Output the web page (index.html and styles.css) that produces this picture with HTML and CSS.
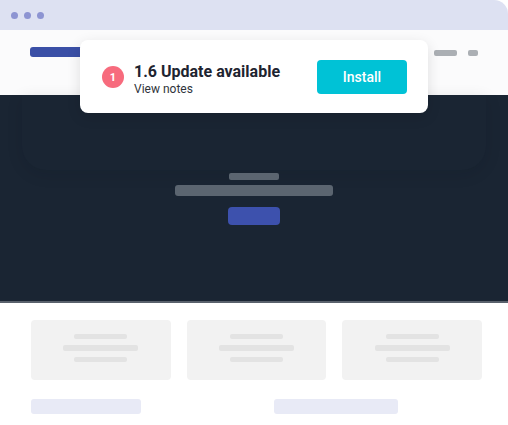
FILE: index.html
```html
<!DOCTYPE html>
<html>
<head>
<meta charset="utf-8">
<link rel="stylesheet" href="styles.css">
</head>
<body>
<div class="window">
  <div class="titlebar">
    <span class="dot"></span><span class="dot"></span><span class="dot"></span>
  </div>
  <div class="header">
    <div class="logo"></div>
    <div class="nav">
      <span class="nav-a"></span><span class="nav-b"></span>
    </div>
  </div>
  <div class="hero">
    <div class="glow"></div>
    <div class="hero-inner">
      <span class="h-line1"></span>
      <span class="h-line2"></span>
      <span class="h-btn"></span>
    </div>
  </div>
  <div class="content">
    <div class="cards">
      <div class="card"><span class="l1"></span><span class="l2"></span><span class="l3"></span></div>
      <div class="card"><span class="l1"></span><span class="l2"></span><span class="l3"></span></div>
      <div class="card"><span class="l1"></span><span class="l2"></span><span class="l3"></span></div>
    </div>
    <div class="footer-bars">
      <span class="fb1"></span>
      <span class="fb2"></span>
    </div>
  </div>

  <div class="toast">
    <div class="badge">1</div>
    <div class="toast-text">
      <div class="toast-title">1.6 Update available</div>
      <div class="toast-sub">View notes</div>
    </div>
    <button class="install">Install</button>
  </div>
</div>
</body>
</html>
```

FILE: styles.css
```css
* { box-sizing: border-box; }
html, body { margin: 0; padding: 0; background: #ffffff; }
body { font-family: Roboto, "Noto Sans", sans-serif; }

.window {
  position: relative;
  width: 508px;
  height: 425px;
  overflow: hidden;
  border-top-right-radius: 14px;
  background: #ffffff;
}

.titlebar {
  height: 30px;
  background: #dde1f2;
  display: flex;
  align-items: center;
  gap: 6px;
  padding-left: 11px;
  padding-top: 1px;
}
.dot {
  width: 7px; height: 7px; border-radius: 50%;
  background: #8d94d2;
}

.header {
  height: 65px;
  background: #fbfbfc;
  display: flex;
  align-items: flex-start;
  justify-content: space-between;
  padding: 17px 30px 0 30px;
}
.logo {
  width: 72px; height: 10px; border-radius: 3px;
  background: #3a4fa6;
}
.nav { display: flex; gap: 11px; padding-top: 3px; }
.nav-a { width: 23px; height: 6px; border-radius: 2px; background: #abafb4; display: block; }
.nav-b { width: 10px; height: 6px; border-radius: 2px; background: #abafb4; display: block; }

.hero {
  position: relative;
  height: 208px;
  background: #1a2533;
  border-bottom: 2px solid #59616c;
  display: flex;
  justify-content: center;
}
.glow {
  position: absolute;
  left: 22px; right: 22px; top: 0; height: 75px;
  border-radius: 0 0 24px 24px;
  background: #1a2533;
  box-shadow: 0 4px 16px rgba(10, 16, 24, 0.12);
}
.hero-inner {
  position: relative;
  display: flex;
  flex-direction: column;
  align-items: center;
  padding-top: 78px;
}
.hero-inner span { display: block; }
.h-line1 { width: 50px; height: 7px; border-radius: 2px; background: #5b6570; }
.h-line2 { width: 158px; height: 11px; border-radius: 3px; background: #5b6570; margin-top: 5px; }
.h-btn { width: 52px; height: 18px; border-radius: 4px; background: #3d51ad; margin-top: 11px; }

.content { padding: 17px 26px 0 31px; }
.cards { display: flex; gap: 16px; }
.card {
  width: 140px; height: 60px;
  background: #f2f2f2;
  border-radius: 4px;
  display: flex;
  flex-direction: column;
  align-items: center;
  padding-top: 14px;
  gap: 6px;
}
.card span { display: block; background: #e3e3e3; border-radius: 2px; }
.card .l1 { width: 53px; height: 5px; }
.card .l2 { width: 75px; height: 6px; }
.card .l3 { width: 53px; height: 5px; }

.footer-bars { display: flex; margin-top: 19px; }
.footer-bars span { display: block; height: 15px; background: #e8eaf6; border-radius: 3px; }
.fb1 { width: 110px; }
.fb2 { width: 124px; margin-left: 133px; }

.toast {
  position: absolute;
  left: 80px; top: 40px;
  width: 348px; height: 73px;
  background: #ffffff;
  border-radius: 8px;
  box-shadow: 0 4px 14px rgba(0, 0, 0, 0.12);
  display: flex;
  align-items: center;
  padding: 0 21px 0 22px;
}
.badge {
  width: 22px; height: 22px; border-radius: 50%;
  background: #f76b7d;
  color: #fff;
  font-size: 11px;
  font-weight: 700;
  display: flex; align-items: center; justify-content: center;
  flex: none;
  margin-top: 1px;
}
.toast-text { margin-left: 10px; flex: 1; margin-top: 4px; }
.toast-title { font-size: 16px; font-weight: 700; color: #1e2430; line-height: 19px; }
.toast-sub { font-size: 12px; color: #30343b; line-height: 14px; margin-top: 1px; }
.install {
  width: 90px; height: 34px;
  border: none; border-radius: 4px;
  background: #00c2d6;
  color: #ffffff;
  font-family: Roboto, "Noto Sans", sans-serif;
  font-size: 14px;
  font-weight: 500;
  margin-top: 1px;
}
```
